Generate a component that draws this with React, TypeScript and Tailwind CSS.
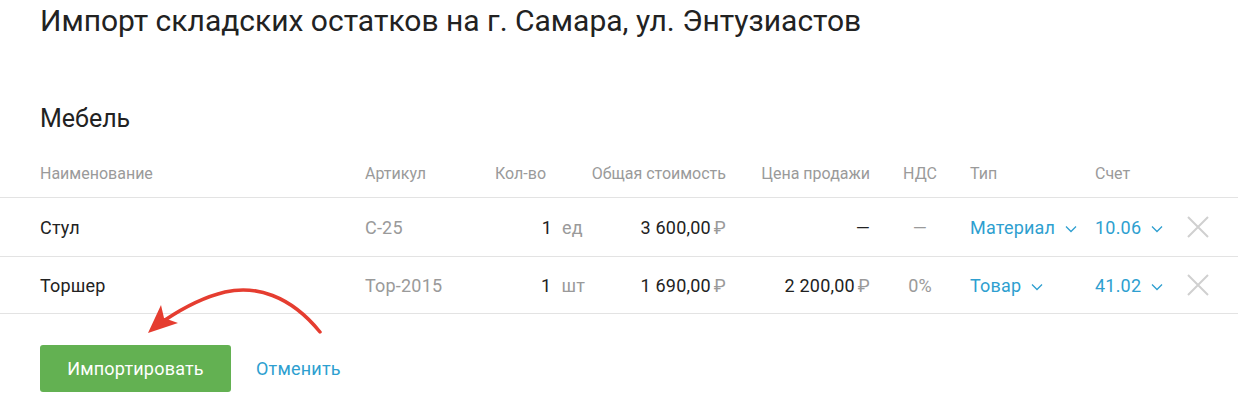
import React from 'react';

type Row = {
  name: string;
  sku: string;
  qty: string;
  unit: string;
  total: string;
  price: string | null;
  vat: string | null;
  type: string;
  account: string;
};

const rows: Row[] = [
  { name: 'Стул', sku: 'С-25', qty: '1', unit: 'ед', total: '3 600,00', price: null, vat: null, type: 'Материал', account: '10.06' },
  { name: 'Торшер', sku: 'Тор-2015', qty: '1', unit: 'шт', total: '1 690,00', price: '2 200,00', vat: '0%', type: 'Товар', account: '41.02' },
];

const Chevron = () => (
  <svg width="12" height="8" viewBox="0 0 12 8" className="ml-[10px] mt-[3px]" fill="none">
    <path d="M1 1.5 L6 6.5 L11 1.5" stroke="#2e9fd0" strokeWidth="1.3" />
  </svg>
);

const Cross = () => (
  <svg width="22" height="22" viewBox="0 0 22 22" fill="none">
    <path d="M1 1 L21 21 M21 1 L1 21" stroke="#d0d0d0" strokeWidth="2" />
  </svg>
);

const Rub = () => <span className="text-[#9a9a9a] ml-[3px]">₽</span>;

const App = (): JSX.Element => {
  return (
    <div className="relative w-[1238px] h-[407px] bg-white text-[#222] overflow-hidden" style={{ fontFamily: 'Roboto, "Liberation Sans", sans-serif' }}>
      <h1 className="pl-[40px] pt-[1px] text-[30px] leading-[40px] font-normal">Импорт складских остатков на г. Самара, ул. Энтузиастов</h1>
      <h2 className="pl-[40px] mt-[62px] text-[25px] leading-[32px]">Мебель</h2>

      {/* header */}
      <div className="flex items-center h-[48px] mt-[15px] border-b border-[#e3e3e3] text-[16px] text-[#9a9a9a]">
        <div className="pl-[40px] w-[365px]">Наименование</div>
        <div className="w-[130px]">Артикул</div>
        <div className="w-[90px]">Кол-во</div>
        <div className="w-[141px] text-right">Общая стоимость</div>
        <div className="w-[144px] text-right">Цена продажи</div>
        <div className="w-[100px] text-center">НДС</div>
        <div className="w-[125px]">Тип</div>
        <div className="w-[92px]">Счет</div>
      </div>

      {rows.map((r, i) => (
        <div key={r.name} className={`flex items-center border-b border-[#e3e3e3] text-[18px] tracking-[0.2px] ${i === 0 ? 'h-[59px]' : 'h-[57px]'}`}>
          <div className="pl-[40px] w-[365px]">{r.name}</div>
          <div className="w-[130px] text-[#9a9a9a]">{r.sku}</div>
          <div className="w-[90px] flex">
            <span className="w-[57px] text-right">{r.qty}</span>
            <span className="ml-[10px] text-[#9a9a9a]">{r.unit}</span>
          </div>
          <div className="w-[141px] text-right">{r.total}<Rub /></div>
          <div className="w-[144px] text-right">{r.price ? <>{r.price}<Rub /></> : '—'}</div>
          <div className="w-[100px] text-center text-[#9a9a9a]">{r.vat ?? '—'}</div>
          <div className="w-[125px] flex items-center text-[#2e9fd0]">{r.type}<Chevron /></div>
          <div className="w-[92px] flex items-center text-[#2e9fd0]">{r.account}<Chevron /></div>
          <Cross />
        </div>
      ))}

      <div className="flex items-center pl-[40px] mt-[31px] gap-[25px]">
        <button className="w-[191px] h-[47px] rounded-[3px] bg-[#63b152] text-white text-[18px] tracking-[0.2px]">Импортировать</button>
        <a className="text-[#2e9fd0] text-[18px] tracking-[0.2px]">Отменить</a>
      </div>

      <svg className="absolute left-0 top-0 pointer-events-none" width="1238" height="407" viewBox="0 0 1238 407" fill="none">
        <path d="M320 332 C 290 295, 255 285, 225 292 C 200 298, 180 310, 165 320" stroke="#e53d30" strokeWidth="3.5" strokeLinecap="round" />
        <path d="M148 333 L161 305 L164 318 L178 323 Z" fill="#e53d30" />
      </svg>
    </div>
  );
};

export default App;
